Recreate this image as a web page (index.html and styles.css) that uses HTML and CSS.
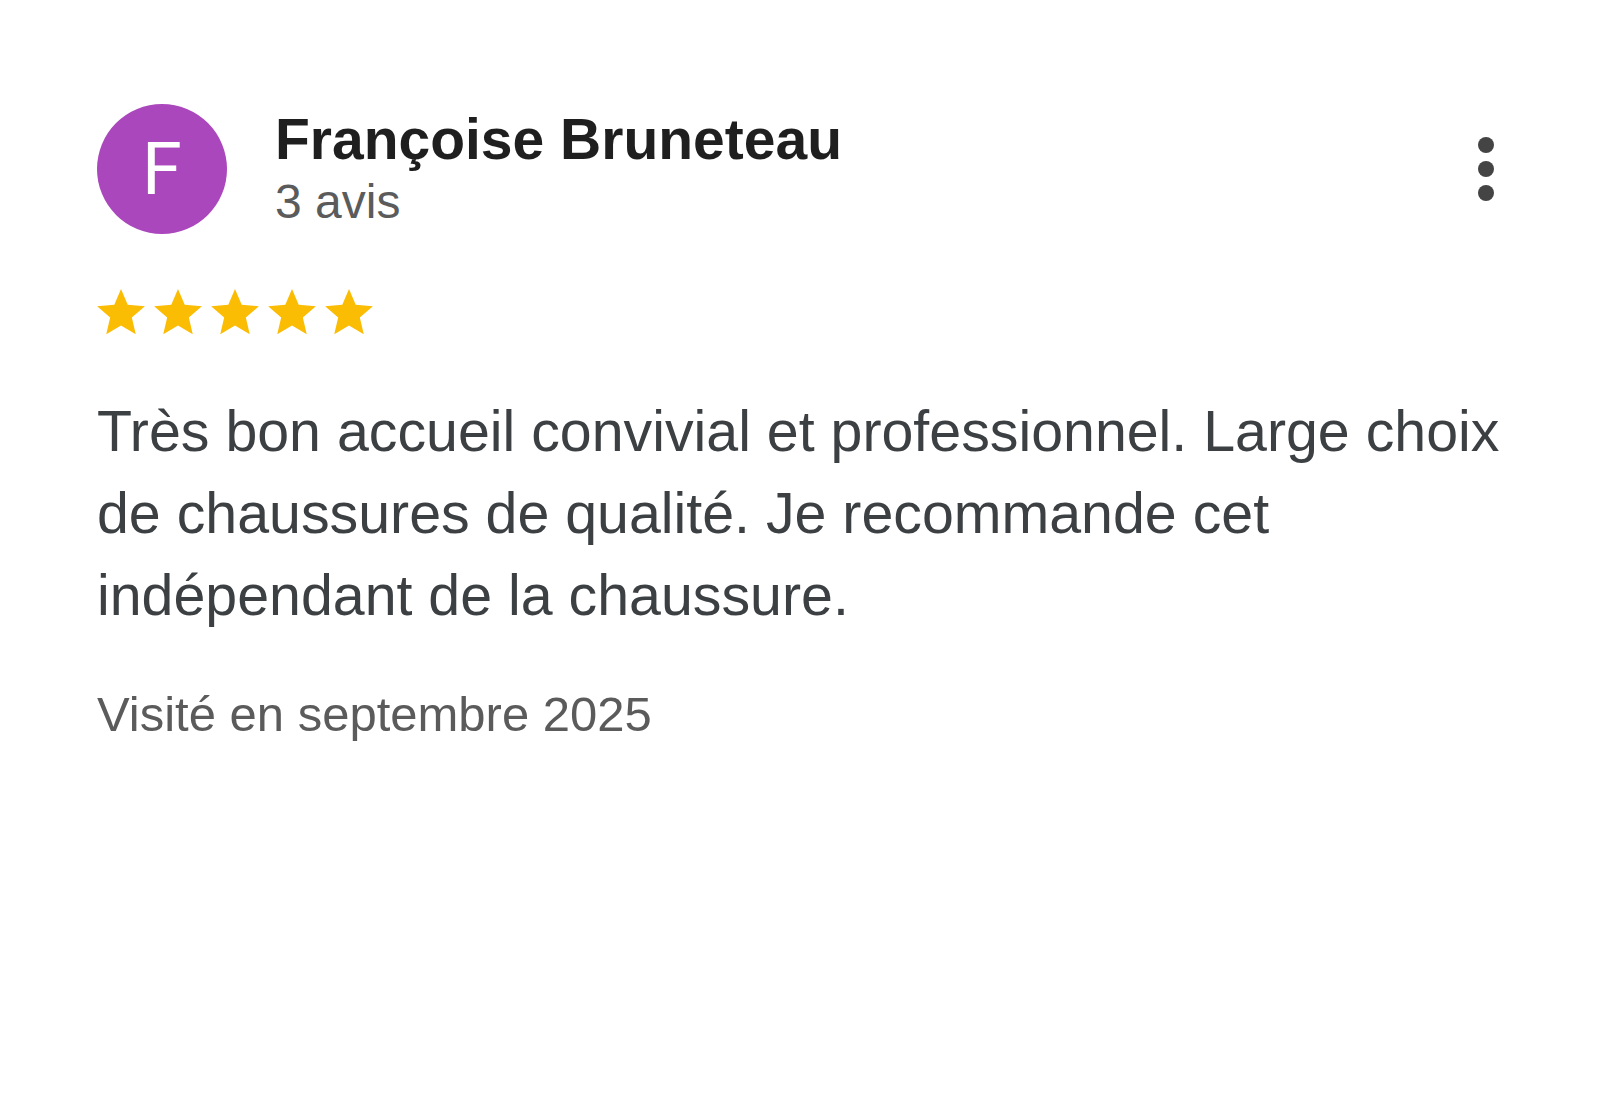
FILE: index.html
```html
<!DOCTYPE html>
<html lang="fr">
<head>
    <meta charset="UTF-8">
    <meta name="viewport" content="width=device-width, initial-scale=1.0">
    <title>Avis - Françoise Bruneteau</title>
    <link rel="stylesheet" href="styles.css">
</head>
<body>
    <div class="review">
        <div class="review-head">
            <div class="avatar">F</div>
            <div class="author">
                <div class="author-name">Françoise Bruneteau</div>
                <div class="author-count">3 avis</div>
            </div>
            <button class="menu" aria-label="Plus d'options">
                <svg width="16" height="64" viewBox="0 0 16 64">
                    <circle cx="8" cy="8" r="8"/>
                    <circle cx="8" cy="32" r="8"/>
                    <circle cx="8" cy="56" r="8"/>
                </svg>
            </button>
        </div>

        <div class="stars" aria-label="5 étoiles sur 5">
            <svg class="star" viewBox="2 2 20 19.27"><path d="M12 17.27L18.18 21l-1.64-7.03L22 9.24l-7.19-.61L12 2 9.19 8.63 2 9.24l5.46 4.73L5.82 21z"/></svg>
            <svg class="star" viewBox="2 2 20 19.27"><path d="M12 17.27L18.18 21l-1.64-7.03L22 9.24l-7.19-.61L12 2 9.19 8.63 2 9.24l5.46 4.73L5.82 21z"/></svg>
            <svg class="star" viewBox="2 2 20 19.27"><path d="M12 17.27L18.18 21l-1.64-7.03L22 9.24l-7.19-.61L12 2 9.19 8.63 2 9.24l5.46 4.73L5.82 21z"/></svg>
            <svg class="star" viewBox="2 2 20 19.27"><path d="M12 17.27L18.18 21l-1.64-7.03L22 9.24l-7.19-.61L12 2 9.19 8.63 2 9.24l5.46 4.73L5.82 21z"/></svg>
            <svg class="star" viewBox="2 2 20 19.27"><path d="M12 17.27L18.18 21l-1.64-7.03L22 9.24l-7.19-.61L12 2 9.19 8.63 2 9.24l5.46 4.73L5.82 21z"/></svg>
        </div>

        <p class="review-text">Très bon accueil convivial et professionnel. Large choix de chaussures de qualité. Je recommande cet indépendant de la chaussure.</p>

        <p class="review-visit">Visité en septembre 2025</p>
    </div>
</body>
</html>
```

FILE: styles.css
```css
body {
    margin: 0;
    background: #fff;
    font-family: 'Liberation Sans', Arial, sans-serif;
}

.review {
    padding: 104px 90px 0 97px;
}

.review-head {
    display: flex;
    align-items: center;
}

.avatar {
    width: 130px;
    height: 130px;
    border-radius: 50%;
    background-color: #ab47bc;
    color: #fff;
    font-family: Roboto, 'Liberation Sans', sans-serif;
    font-size: 72px;
    display: flex;
    align-items: center;
    justify-content: center;
    flex-shrink: 0;
}

.author {
    margin-left: 48px;
    display: flex;
    flex-direction: column;
}

.author-name {
    font-size: 57px;
    line-height: 62px;
    font-weight: bold;
    color: #1f1f1f;
}

.author-count {
    margin-top: 4px;
    font-size: 48px;
    line-height: 56px;
    color: #5b5b5b;
}

.menu {
    margin-left: auto;
    margin-right: 16px;
    padding: 0;
    border: none;
    background: none;
    fill: #444;
    display: flex;
    cursor: pointer;
}

.stars {
    margin-top: 55px;
    display: flex;
    gap: 9px;
}

.star {
    width: 48px;
    height: 46px;
    fill: #fbbc04;
}

.review-text {
    margin: 55px 0 0;
    font-size: 57.3px;
    line-height: 82px;
    color: #3c4043;
}

.review-visit {
    margin: 48px 0 0;
    font-size: 49px;
    line-height: 60px;
    color: #5b5b5b;
}
```
